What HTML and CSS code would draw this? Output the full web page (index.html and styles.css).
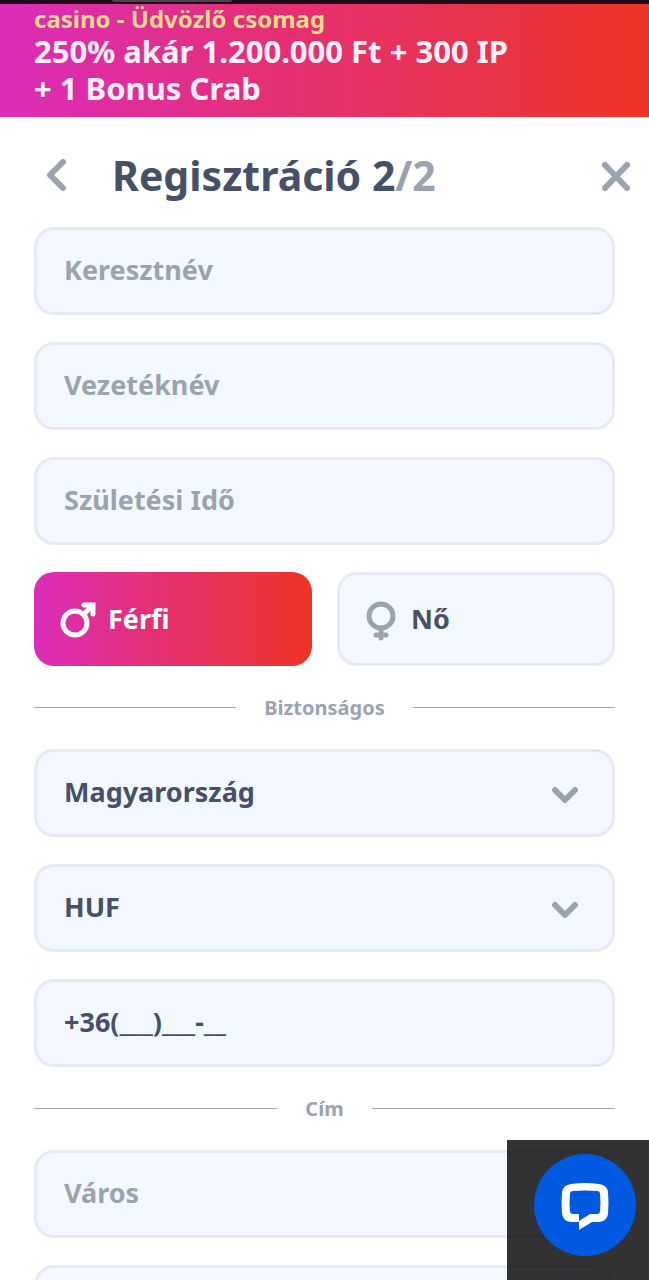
FILE: index.html
```
<!DOCTYPE html>
<html lang="hu">
  <head>
    <title>Regisztráció</title>
    <meta charset="UTF-8">
    <meta name="viewport" content="width=device-width, initial-scale=1">
    <link rel="stylesheet" href="styles.css">
  </head>
  <body>
    <div class="statusbar"><span class="notch"></span></div>
    <div class="promo">
      <p class="promo-label">casino - Üdvözlő csomag</p>
      <p class="promo-text">250% akár 1.200.000 Ft + 300 IP<br>+ 1 Bonus Crab</p>
    </div>
    <header>
      <button class="icon-btn" type="button" aria-label="Vissza">
        <svg width="24" height="34" viewBox="0 0 24 34"><path d="M19 4L6 17L19 30"/></svg>
      </button>
      <h1>Regisztráció 2<span class="total">/2</span></h1>
      <button class="icon-btn" type="button" aria-label="Bezárás">
        <svg width="30" height="34" viewBox="0 0 30 34"><path d="M4 7L26 30M26 7L4 30"/></svg>
      </button>
    </header>
    <form>
      <input class="field" type="text" placeholder="Keresztnév" aria-label="Keresztnév">
      <input class="field" type="text" placeholder="Vezetéknév" aria-label="Vezetéknév">
      <input class="field" type="text" placeholder="Születési Idő" aria-label="Születési Idő">
      <div class="genders">
        <input type="radio" name="gender" id="male" checked>
        <label class="gender" for="male">
          <svg width="36" height="42" viewBox="0 0 36 42">
            <circle cx="15" cy="24" r="12"/>
            <path d="M24 15L31 8"/>
            <path class="head" d="M24 6H33V15"/>
          </svg>
          Férfi
        </label>
        <input type="radio" name="gender" id="female">
        <label class="gender" for="female">
          <svg width="36" height="42" viewBox="0 0 36 42">
            <circle cx="18" cy="17" r="12"/>
            <path d="M18 29V39M13 36H23"/>
          </svg>
          Nő
        </label>
      </div>
      <div class="divider">Biztonságos</div>
      <div class="select">
        <select class="field" aria-label="Ország"><option>Magyarország</option></select>
        <svg width="28" height="20" viewBox="0 0 28 20"><path d="M4 5L14 15L24 5"/></svg>
      </div>
      <div class="select">
        <select class="field" aria-label="Pénznem"><option>HUF</option></select>
        <svg width="28" height="20" viewBox="0 0 28 20"><path d="M4 5L14 15L24 5"/></svg>
      </div>
      <input class="field" type="tel" value="+36(___)___-__" aria-label="Telefonszám">
      <div class="divider">Cím</div>
      <input class="field" type="text" placeholder="Város" aria-label="Város">
      <input class="field" type="text" aria-label="Utca">
    </form>
    <div class="chat">
      <button type="button" aria-label="Chat">
        <svg width="48" height="48" viewBox="0 0 48 48">
          <path fill="#fff" fill-rule="evenodd" d="M10 3Q24 1 38 3Q46 4 47 11Q48 22 47 33Q46 40 38 41H31L18 49V41H10Q2 40 1 33Q0 22 1 11Q2 4 10 3ZM12 10Q24 9 36 10Q39 10 39 13Q40 22 39 30Q39 33 36 33H29L18 40V33H12Q9 33 9 30Q8 22 9 13Q9 10 12 10Z"/>
        </svg>
      </button>
    </div>
  </body>
</html>
```
FILE: styles.css
```
* {
  box-sizing: border-box;
}
body {
  margin: 0;
  height: 100vh;
  display: flex;
  flex-direction: column;
  overflow: hidden;
  background: white;
  color: #475066;
  font-family: "Noto Sans", sans-serif;
  font-weight: bold;
}
svg {
  flex: none;
  fill: none;
  stroke: #9ba3af;
  stroke-width: 5px;
  stroke-linecap: round;
  stroke-linejoin: round;
}
button {
  border: 0;
  padding: 0;
  background: none;
  cursor: pointer;
}
.statusbar {
  flex: none;
  height: 4px;
  padding-left: 112px;
  background: #200a18;
}
.notch {
  display: block;
  width: 120px;
  height: 2px;
  border-radius: 0 0 4px 4px;
  background: #51414c;
}
.promo {
  flex: none;
  padding: 0 34px 10px;
  background: linear-gradient(90deg, #db2dbb, #e52f78 40%, #e93349 75%, #ee3424);
  color: #fff0fb;
}
.promo p {
  margin: 0;
}
.promo-label {
  font-size: 24px;
  line-height: 28px;
  padding-top: 1px;
  color: #ecdc8c;
}
.promo-text {
  font-size: 31px;
  line-height: 37px;
}
header {
  flex: none;
  display: flex;
  align-items: center;
  height: 109px;
  padding: 6px 18px 0 44px;
}
h1 {
  flex: 1;
  margin: 0 0 0 44px;
  font-size: 41px;
  line-height: 54px;
}
.total {
  color: #9ba3af;
}
.icon-btn {
  display: flex;
}
.icon-btn svg {
  stroke-width: 6px;
}
form {
  flex: 1;
  min-height: 0;
  display: flex;
  flex-direction: column;
  gap: 27px;
  padding: 1px 34px 34px;
  overflow-y: auto;
  scrollbar-width: none;
}
.field {
  flex: none;
  display: block;
  width: 100%;
  height: 88px;
  margin: 0;
  padding: 0 27px 4px;
  border: 3px solid #e7e9f6;
  border-radius: 20px;
  outline: 0;
  background: #f3f8fe;
  color: inherit;
  font: inherit;
  font-size: 27px;
  appearance: none;
}
.field::placeholder {
  color: #9ba3af;
  opacity: 1;
}
.genders {
  flex: none;
  display: flex;
  gap: 25px;
}
.genders input {
  position: absolute;
  opacity: 0;
}
.gender {
  flex: 1;
  display: flex;
  align-items: center;
  gap: 12px;
  height: 94px;
  padding: 0 23px 2px;
  border: 3px solid #e7e9f6;
  border-radius: 20px;
  background: #f3f8fe;
  font-size: 27px;
  cursor: pointer;
}
.gender svg {
  margin-top: 4px;
}
.gender .head {
  stroke-linejoin: miter;
}
input:checked + .gender {
  border: 0;
  padding: 0 26px 2px;
  background: linear-gradient(90deg, #db2dbb, #e52f78 40%, #e93349 75%, #ee3424);
  color: white;
}
input:checked + .gender svg {
  stroke: white;
}
.divider {
  flex: none;
  display: flex;
  align-items: center;
  gap: 28px;
  height: 29px;
  color: #9ba3af;
  font-size: 20px;
}
.divider::before,
.divider::after {
  content: '';
  flex: 1;
  height: 1px;
  background: #a5abb2;
}
.select {
  flex: none;
  position: relative;
}
.select svg {
  position: absolute;
  right: 36px;
  top: 36px;
  stroke-width: 6px;
  pointer-events: none;
}
.chat {
  position: fixed;
  right: 0;
  bottom: 0;
  width: 142px;
  height: 140px;
  padding: 14px 13px 0 27px;
  background: rgba(0,0,0,0.8);
}
.chat button {
  display: flex;
  align-items: center;
  justify-content: center;
  width: 102px;
  height: 102px;
  border-radius: 50%;
  background: #0059e1;
}
.chat svg {
  stroke: none;
  overflow: visible;
}
```
